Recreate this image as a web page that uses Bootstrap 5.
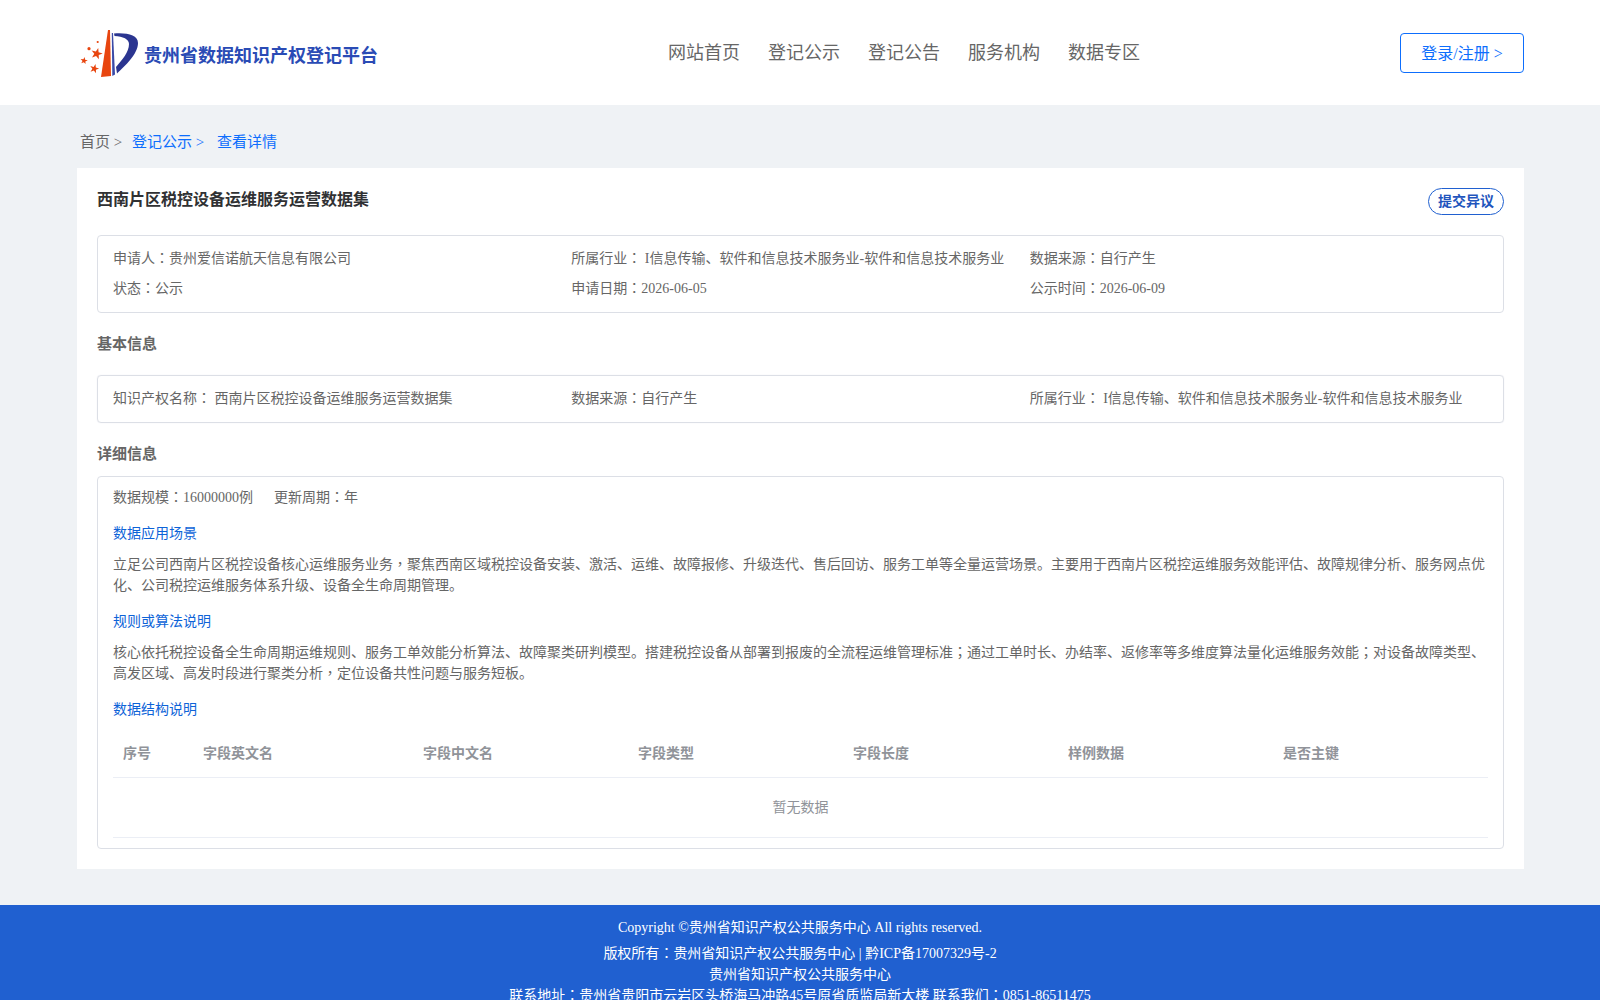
<!DOCTYPE html>
<html lang="zh-CN">
<head>
  <meta charset="UTF-8">
  <title>贵州省数据知识产权登记平台</title>
  <link href="https://cdn.jsdelivr.net/npm/bootstrap@5.3.0/dist/css/bootstrap.min.css" rel="stylesheet">
  <style>
    body {
      background-color: #eff2f5;
      font-family: "Liberation Serif", "Noto Sans CJK SC", serif;
      font-size: 14px;
      color: #666;
    }
    /* centred colon and comma, as in the reference */
    .mid { font-family: "Noto Sans CJK TC", sans-serif; font-feature-settings: "locl" 0; line-height: 1; }
    .wrap { width: 1447px; margin-left: 77px; }
    .top-bar { background: #fff; height: 105px; }
    .top-bar .wrap { height: 105px; }
    .brand-box { width: 480px; margin-left: -2px; flex: none; }
    .brand-name { color: #2a4bb5; font-size: 18px; font-weight: 700; padding-top: 8px; margin-left: -1px; }
    .main-menu { gap: 28px; font-size: 18px; margin-left: 113px; padding-top: 2px; }
    .main-menu a { color: #666; text-decoration: none; }
    .login-btn {
      width: 124px; height: 40px; padding: 2px 0 0; line-height: 36px;
      font-size: 16px; border-color: #0d6efd; color: #0d6efd; border-radius: 4px;
    }
    .crumbs { height: 63px; padding: 26px 0 0 3px; font-size: 15px; line-height: 22px; }
    .crumbs a { color: #0d6efd; text-decoration: none; }
    .crumbs .sep-a { margin-right: 6px; }
    .crumbs .sep-b { margin-right: 9px; }
    .sheet { background: #fff; height: 701px; padding: 20px; }
    .sheet-title { font-size: 16px; font-weight: 700; color: #303133; line-height: 24px; }
    .objection {
      height: 27px; width: 76px; padding: 0; font-size: 14px; font-weight: 700; line-height: 24px;
      color: #1f55bd; border: 1px solid #2060d0; border-radius: 14px; background: #fff;
    }
    .info-box { border: 1px solid #dcdfe6; border-radius: 4px; padding: 0 15px; line-height: 21px; }
    .box-a { margin-top: 20px; height: 78px; padding-top: 12px; }
    .box-a .row + .row { margin-top: 9px; }
    .box-b { height: 48px; padding-top: 12px; box-shadow: 0 0 1px #dcdfe6; }
    .box-c { height: 373px; padding-top: 10px; }
    .info-grid { --bs-gutter-x: 0; }
    .sec-title { font-size: 15px; font-weight: 700; color: #666; line-height: 22px; }
    .sec-a { margin-top: 20px; margin-bottom: 20px; }
    .sec-b { margin-top: 20px; margin-bottom: 11px; }
    .sub-head { color: #0d63d8; margin: 15px 0 10px; line-height: 21px; }
    .para { margin: 0; line-height: 21px; }
    .field-table { margin: 0; width: 100%; table-layout: fixed; color: #909399; }
    .field-table th {
      height: 47px; padding: 0 10px; font-weight: 700; color: #909399; border-bottom: 1px solid #ebeef5;
    }
    .field-table td {
      height: 60px; text-align: center; color: #909399; border-bottom: 1px solid #ebeef5; padding: 0;
    }
    .bottom-bar {
      background: #2060d0; color: #fff; margin-top: 36px; text-align: center;
      padding-top: 12px; line-height: 21px; height: 130px;
    }
    .bottom-bar .copy-line { margin-bottom: 5px; }
  </style>
</head>
<body>
  <header class="top-bar">
    <div class="wrap d-flex align-items-center">
      <div class="brand-box d-flex align-items-center">
        <svg width="70" height="60" viewBox="0 0 70 60">
          <defs>
            <polygon id="star" points="0,-1 .235,-.324 .951,-.309 .38,.124 .588,.809 0,.4 -.588,.809 -.38,.124 -.951,-.309 -.235,-.324"/>
          </defs>
          <!-- red spike -->
          <path d="M33 7 L35 7 L36 53 L26 54 Z" fill="#e8450f"/>
          <!-- P of the mark -->
          <path d="M36.800 10 L38 10 L40 51.500 L37.300 53 Z" fill="#3b4aa6"/>
          <path d="M39 10.500 C52 9.500 63 12 63 20 C63 31 50 43 42 50.500 L41 44 C47 37 54 29 54 21 C54 16 48 13.500 39.500 13 Z" fill="#2b3590"/>
          <g fill="#e8450f">
            <use href="#star" transform="translate(21.700 30.700) rotate(15) scale(6)"/>
            <use href="#star" transform="translate(9 37.700) rotate(10) scale(3.800)"/>
            <use href="#star" transform="translate(19.300 45.700) rotate(15) scale(4.800)"/>
            <circle cx="14" cy="25.700" r="1.600"/>
            <circle cx="22.700" cy="19" r="1.100"/>
          </g>
        </svg>
        <span class="brand-name">贵州省数据知识产权登记平台</span>
      </div>
      <nav class="main-menu d-flex">
        <a href="#">网站首页</a>
        <a href="#">登记公示</a>
        <a href="#">登记公告</a>
        <a href="#">服务机构</a>
        <a href="#">数据专区</a>
      </nav>
      <button type="button" class="btn login-btn ms-auto">登录/注册 &gt;</button>
    </div>
  </header>

  <div class="wrap">
    <div class="crumbs">
      <span class="sep-a">首页 &gt;</span>
      <a href="#" class="sep-b">登记公示 &gt;</a>
      <a href="#">查看详情</a>
    </div>
    <main class="sheet">
      <div class="d-flex justify-content-between align-items-start">
        <div class="sheet-title">西南片区税控设备运维服务运营数据集</div>
        <button type="button" class="btn objection">提交异议</button>
      </div>

      <div class="info-box box-a">
        <div class="row info-grid">
          <div class="col-4">申请人<span class="mid">：</span>贵州爱信诺航天信息有限公司</div>
          <div class="col-4">所属行业<span class="mid">：</span> I信息传输、软件和信息技术服务业-软件和信息技术服务业</div>
          <div class="col-4">数据来源<span class="mid">：</span>自行产生</div>
        </div>
        <div class="row info-grid">
          <div class="col-4">状态<span class="mid">：</span>公示</div>
          <div class="col-4">申请日期<span class="mid">：</span>2026-06-05</div>
          <div class="col-4">公示时间<span class="mid">：</span>2026-06-09</div>
        </div>
      </div>

      <div class="sec-title sec-a">基本信息</div>
      <div class="info-box box-b">
        <div class="row info-grid">
          <div class="col-4">知识产权名称<span class="mid">：</span> 西南片区税控设备运维服务运营数据集</div>
          <div class="col-4">数据来源<span class="mid">：</span>自行产生</div>
          <div class="col-4">所属行业<span class="mid">：</span> I信息传输、软件和信息技术服务业-软件和信息技术服务业</div>
        </div>
      </div>

      <div class="sec-title sec-b">详细信息</div>
      <div class="info-box box-c">
        <div class="d-flex" style="gap:21px">
          <span>数据规模<span class="mid">：</span>16000000例</span>
          <span>更新周期<span class="mid">：</span>年</span>
        </div>
        <div class="sub-head">数据应用场景</div>
        <p class="para">立足公司西南片区税控设备核心运维服务业务<span class="mid">，</span>聚焦西南区域税控设备安装、激活、运维、故障报修、升级迭代、售后回访、服务工单等全量运营场景。主要用于西南片区税控运维服务效能评估、故障规律分析、服务网点优化、公司税控运维服务体系升级、设备全生命周期管理。</p>
        <div class="sub-head">规则或算法说明</div>
        <p class="para">核心依托税控设备全生命周期运维规则、服务工单效能分析算法、故障聚类研判模型。搭建税控设备从部署到报废的全流程运维管理标准<span class="mid">；</span>通过工单时长、办结率、返修率等多维度算法量化运维服务效能<span class="mid">；</span>对设备故障类型、高发区域、高发时段进行聚类分析<span class="mid">，</span>定位设备共性问题与服务短板。</p>
        <div class="sub-head">数据结构说明</div>
        <table class="field-table">
          <colgroup>
            <col style="width:80px"><col style="width:220px"><col style="width:215px"><col style="width:215px">
            <col style="width:215px"><col style="width:215px"><col>
          </colgroup>
          <thead>
            <tr>
              <th>序号</th><th>字段英文名</th><th>字段中文名</th><th>字段类型</th><th>字段长度</th><th>样例数据</th><th>是否主键</th>
            </tr>
          </thead>
          <tbody>
            <tr><td colspan="7">暂无数据</td></tr>
          </tbody>
        </table>
      </div>
    </main>
  </div>

  <footer class="bottom-bar">
    <div class="copy-line">Copyright ©贵州省知识产权公共服务中心 All rights reserved.</div>
    <div>版权所有<span class="mid">：</span>贵州省知识产权公共服务中心 | 黔ICP备17007329号-2</div>
    <div>贵州省知识产权公共服务中心</div>
    <div>联系地址<span class="mid">：</span>贵州省贵阳市云岩区头桥海马冲路45号原省质监局新大楼 联系我们<span class="mid">：</span>0851-86511475</div>
  </footer>

  <script src="https://cdn.jsdelivr.net/npm/bootstrap@5.3.0/dist/js/bootstrap.bundle.min.js"></script>
</body>
</html>
